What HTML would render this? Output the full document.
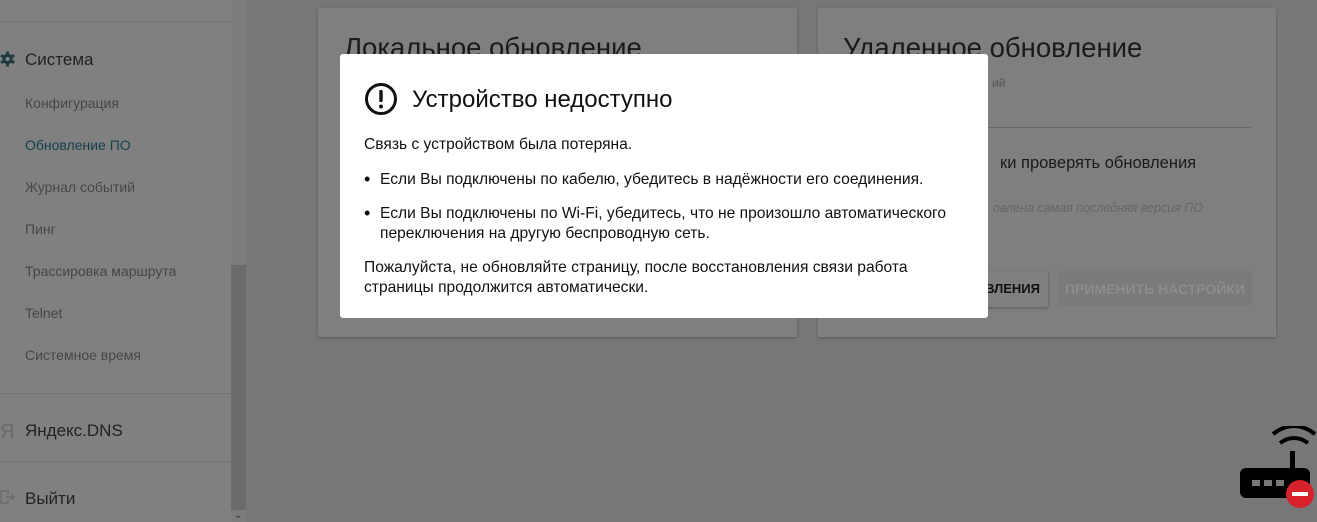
<!DOCTYPE html>
<html><head><meta charset="utf-8"><style>
*{margin:0;padding:0;box-sizing:border-box}
body{width:1317px;height:522px;overflow:hidden;background:#777;font-family:"Liberation Sans",sans-serif;position:relative}
.sb{position:absolute;left:0;top:0;width:231px;height:522px;background:#808080}
.scr{position:absolute;left:231px;top:0;width:15px;height:522px;background:#7c7c7c}
.thumb{position:absolute;left:231px;top:265px;width:15px;height:245px;background:#6b6b6b}
.hr{position:absolute;left:0;width:231px;height:1px;background:#747474}
.it{position:absolute;left:25px;font-size:14px;color:#464646}
.big{position:absolute;left:25px;font-size:17px;color:#222}
.card{position:absolute;top:8px;height:329px;background:#7f7f7f;box-shadow:0 1px 3px rgba(0,0,0,.25)}
.modal{position:absolute;left:340px;top:54px;width:648px;height:264px;background:#fff;border-radius:3px;color:#111;font-size:15.6px}
.modal p{position:absolute;left:24px;line-height:20px;white-space:nowrap}
.b{display:inline-block;width:16px;font-size:18px;line-height:18px;vertical-align:top}
</style></head><body>
<div class="sb"></div>
<div class="hr" style="top:21px"></div>
<svg style="position:absolute;left:0;top:50px" width="17" height="18" viewBox="0 0 18 18"><g fill="#1f3a3f"><circle cx="8" cy="9" r="5.5"/><g stroke="#1f3a3f" stroke-width="3"><line x1="8" y1="1" x2="8" y2="17"/><line x1="1" y1="5" x2="15" y2="13"/><line x1="1" y1="13" x2="15" y2="5"/></g></g><circle cx="8" cy="9" r="2.3" fill="#808080"/></svg>
<div class="big" style="top:50px">Система</div>
<div class="it" style="top:95px">Конфигурация</div>
<div class="it" style="top:137px;color:#15404c">Обновление ПО</div>
<div class="it" style="top:179px">Журнал событий</div>
<div class="it" style="top:221px">Пинг</div>
<div class="it" style="top:263px">Трассировка маршрута</div>
<div class="it" style="top:305px">Telnet</div>
<div class="it" style="top:347px">Системное время</div>
<div class="hr" style="top:393px"></div>
<div class="big" style="left:0;top:421px;color:#6a6a6a;font-size:20px">Я</div>
<div class="big" style="top:421px">Яндекс.DNS</div>
<div class="hr" style="top:461px"></div>
<svg style="position:absolute;left:0;top:490px" width="16" height="14"><path d="M1 1h7v3M1 1v12h7v-3" stroke="#6a6a6a" stroke-width="1.5" fill="none"/><path d="M6 7h8M11 4l3 3-3 3" stroke="#6a6a6a" stroke-width="1.5" fill="none"/></svg>
<div class="big" style="top:489px">Выйти</div>
<div class="scr"></div><div class="thumb"></div>
<div style="position:absolute;left:234px;top:510px;font-size:10px;color:#333">⌄</div>

<div class="card" style="left:318px;width:479px"><div style="position:absolute;left:26px;top:24px;font-size:27.5px;color:#1a1a1a">Локальное обновление</div></div>
<div class="card" style="left:818px;width:458px">
<div style="position:absolute;left:25px;top:24px;font-size:27.5px;color:#1a1a1a">Удаленное обновление</div>
<div style="position:absolute;left:174px;top:68px;font-size:12px;color:#555">ий</div>
<div style="position:absolute;left:170px;top:119px;width:263px;height:1px;background:#666"></div>
<div style="position:absolute;left:182px;top:146px;font-size:16.5px;color:#1a1a1a">ки проверять обновления</div>
<div style="position:absolute;left:175px;top:193px;font-size:12.5px;color:#666;font-style:italic">овлена самая последняя версия ПО</div>
<div style="position:absolute;left:150px;top:263px;width:80px;height:36px;background:#7f7f7f;box-shadow:0 1px 3px rgba(0,0,0,.3);font-size:13px;font-weight:bold;color:#111;text-align:right;padding:10px 8px 0 0">ВЛЕНИЯ</div>
<div style="position:absolute;left:240px;top:263px;width:194px;height:35px;background:#7a7a7a;font-size:14px;font-weight:bold;color:#8c8c8c;text-align:center;padding-top:10px">ПРИМЕНИТЬ НАСТРОЙКИ</div>
</div>

<div class="modal">
<svg style="position:absolute;left:24px;top:28px" width="34" height="34" viewBox="0 0 34 34"><circle cx="17" cy="17" r="14.5" stroke="#111" stroke-width="3" fill="none"/><rect x="15.3" y="8" width="3.4" height="12" rx="1" fill="#111"/><circle cx="17" cy="24.5" r="2" fill="#111"/></svg>
<div style="position:absolute;left:72px;top:32px;font-size:24px;color:#111">Устройство недоступно</div>
<p style="top:81px">Связь с устройством была потеряна.</p>
<p style="top:116px"><span class="b">•</span>Если Вы подключены по кабелю, убедитесь в надёжности его соединения.</p>
<p style="top:150px"><span class="b">•</span>Если Вы подключены по Wi-Fi, убедитесь, что не произошло автоматического<br><span style="padding-left:16px">переключения на другую беспроводную сеть.</span></p>
<p style="top:204px">Пожалуйста, не обновляйте страницу, после восстановления связи работа<br>страницы продолжится автоматически.</p>
</div>

<svg style="position:absolute;left:1238px;top:426px" width="79" height="84" viewBox="0 0 79 84"><path d="M35 8q21-16 42 0M42 17q14-10 28 0" stroke="#000" stroke-width="4" fill="none"/><rect x="52" y="25" width="5" height="22" fill="#000"/><rect x="2" y="42" width="70" height="30" rx="6" fill="#000"/><rect x="14" y="54" width="8" height="6" fill="#777"/><rect x="26" y="54" width="8" height="6" fill="#777"/><rect x="38" y="54" width="8" height="6" fill="#777"/><circle cx="62" cy="68" r="14" fill="#d9212c"/><rect x="54" y="66" width="16" height="4" fill="#fff"/></svg>
</body></html>
